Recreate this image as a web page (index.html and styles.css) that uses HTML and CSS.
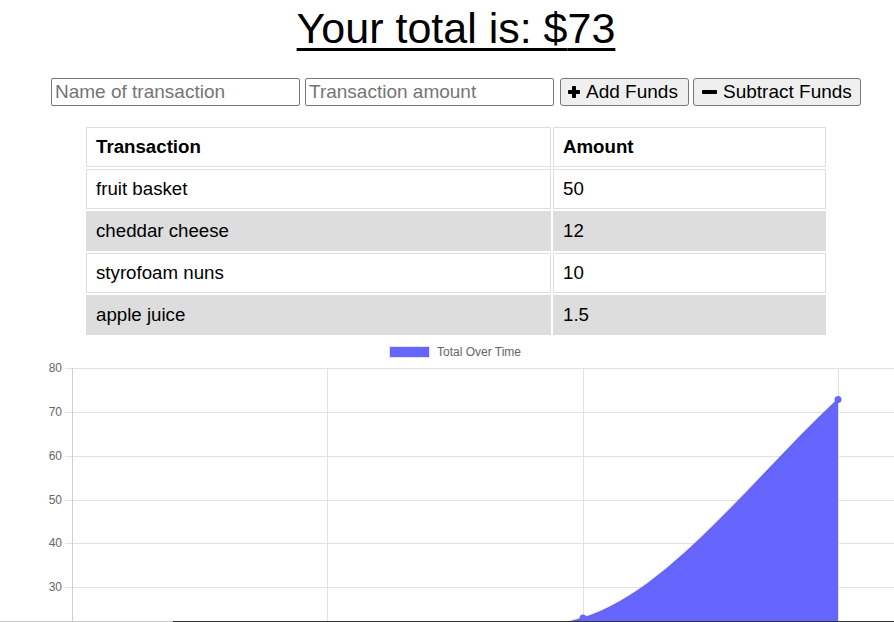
FILE: index.html
```html
<!DOCTYPE html>
<html>
<head>
<meta charset="utf-8">
<title>Budget Tracker</title>
<link rel="stylesheet" href="styles.css">
</head>
<body>
<div class="wrap">
  <h1 class="total">Your total is: $<span>73</span></h1>
  <div class="form">
    <input class="field" type="text" placeholder="Name of transaction">
    <input class="field field-amount" type="number" placeholder="Transaction amount">
    <button class="btn btn-add"><svg class="ico" viewBox="0 0 12 12" width="12" height="12"><rect x="4" y="0" width="4" height="12" rx="0.8"/><rect x="0" y="4" width="12" height="4" rx="0.8"/></svg>Add Funds</button>
    <button class="btn btn-sub"><svg class="ico ico-minus" viewBox="0 0 15 4" width="15" height="4"><rect x="0" y="0" width="15" height="4" rx="0.8"/></svg>Subtract Funds</button>
  </div>
  <table class="tx">
    <thead>
      <tr><th class="c1">Transaction</th><th class="c2">Amount</th></tr>
    </thead>
    <tbody>
      <tr><td>fruit basket</td><td>50</td></tr>
      <tr class="alt"><td>cheddar cheese</td><td>12</td></tr>
      <tr><td>styrofoam nuns</td><td>10</td></tr>
      <tr class="alt"><td>apple juice</td><td>1.5</td></tr>
    </tbody>
  </table>
</div>
<svg class="chart" viewBox="0 336 894 286" width="894" height="286">
  <rect x="389.5" y="346.5" width="40" height="11" fill="#6666ff" stroke="#e3e3f3" stroke-width="1"/>
  <text class="lg" x="437" y="356">Total Over Time</text>
  <g class="grid">
    <line x1="65" y1="368.5" x2="894" y2="368.5"/>
    <line x1="65" y1="412.5" x2="894" y2="412.5"/>
    <line x1="65" y1="456.5" x2="894" y2="456.5"/>
    <line x1="65" y1="500.5" x2="894" y2="500.5"/>
    <line x1="65" y1="543.5" x2="894" y2="543.5"/>
    <line x1="65" y1="587.5" x2="894" y2="587.5"/>
    <line x1="327.5" y1="368" x2="327.5" y2="622"/>
    <line x1="583.5" y1="368" x2="583.5" y2="622"/>
    <line x1="838.5" y1="368" x2="838.5" y2="622"/>
  </g>
  <line x1="72.5" y1="368" x2="72.5" y2="622" stroke="#cfcfcf"/>
  <g class="ylab">
    <text x="62" y="372">80</text>
    <text x="62" y="416">70</text>
    <text x="62" y="460">60</text>
    <text x="62" y="504">50</text>
    <text x="62" y="547">40</text>
    <text x="62" y="591">30</text>
  </g>
  <path d="M327,668 C 420,650 500,640 583,617.7 C 668,592 753,478 838,398.7 L838,700 L327,700 Z" fill="#6666ff"/>
  <path d="M327,668 C 420,650 500,640 583,617.7 C 668,592 753,478 838,398.7" fill="none" stroke="rgba(0,0,0,0.12)" stroke-width="2"/>
  <circle cx="583" cy="618" r="3.5" fill="#6666ff"/>
  <circle cx="838" cy="399.5" r="3.5" fill="#6666ff"/>
  <line x1="0" y1="621.5" x2="173" y2="621.5" stroke="#c8c8c8"/>
  <line x1="173" y1="621.5" x2="894" y2="621.5" stroke="#333"/>
</svg>
</body>
</html>
```
FILE: styles.css
```css
html, body {
  margin: 0;
  padding: 0;
  overflow: hidden;
  background: #fff;
}
body {
  font-family: "Liberation Sans", Arial, sans-serif;
  color: #000;
}
.wrap {
  padding-left: 18px;
}
.total {
  margin: 4px 0 0;
  font-size: 43px;
  line-height: 48px;
  font-weight: normal;
  text-align: center;
  text-decoration: underline;
  text-decoration-thickness: 3px;
  text-underline-offset: 5px;
}
.form {
  display: flex;
  justify-content: center;
  align-items: center;
  margin-top: 26px;
  height: 28px;
}
.field {
  box-sizing: border-box;
  width: 249px;
  height: 28px;
  margin: 0 5px 0 0;
  padding: 1px 3px;
  border: 1px solid #767676;
  border-radius: 2px;
  font-family: "Liberation Sans", Arial, sans-serif;
  font-size: 19px;
  color: #000;
  background: #fff;
}
.field-amount {
  margin-right: 6px;
  -moz-appearance: textfield;
}
.field-amount::-webkit-inner-spin-button,
.field-amount::-webkit-outer-spin-button {
  -webkit-appearance: none;
  margin: 0;
}
.field::placeholder {
  color: #757575;
  opacity: 1;
}
.btn {
  box-sizing: border-box;
  height: 28px;
  display: flex;
  align-items: center;
  gap: 6px;
  padding: 0 5px 0 7px;
  border: 1px solid #767676;
  border-radius: 3px;
  background: #efefef;
  font-family: "Liberation Sans", Arial, sans-serif;
  font-size: 19px;
  color: #000;
  white-space: nowrap;
}
.btn-add {
  width: 129px;
  margin-right: 4px;
}
.btn-sub {
  width: 168px;
}
.ico {
  fill: #000;
  flex: none;
}
.ico-minus {
  margin-left: 1px;
}
.tx {
  margin: 19px 0 0 66px;
  width: 744px;
  border-collapse: separate;
  border-spacing: 2px;
  font-size: 18.7px;
}
.tx th, .tx td {
  box-sizing: border-box;
  height: 40px;
  padding: 9px 9px 9px 9px;
  border: 1px solid #dddddd;
  text-align: left;
  line-height: 20px;
}
.tx th {
  font-weight: bold;
}
.tx .c1 {
  width: 465px;
}
.tx .c2 {
  width: 273px;
}
.tx tr.alt td {
  background: #dddddd;
}
.chart {
  display: block;
  margin-top: -1px;
}
.chart .grid line {
  stroke: #e1e1e1;
  stroke-width: 1;
}
.chart .lg {
  font-family: "Liberation Sans", Arial, sans-serif;
  font-size: 12px;
  fill: #666;
}
.chart .ylab text {
  font-family: "Liberation Sans", Arial, sans-serif;
  font-size: 12px;
  fill: #666;
  text-anchor: end;
}
```
